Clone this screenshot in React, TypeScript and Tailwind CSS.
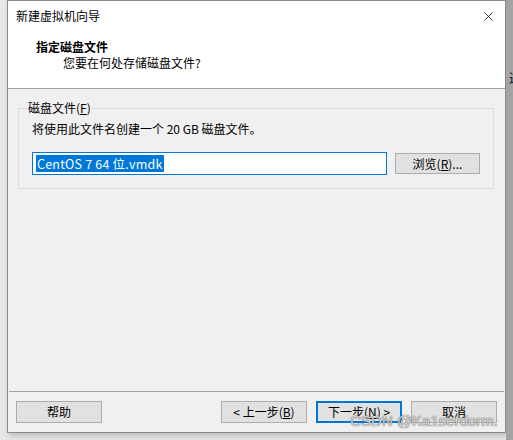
import { X } from "lucide-react";

const font = "font-['Noto_Sans_CJK_SC','Noto_Sans',sans-serif]";

function Btn({
  children,
  primary,
  className = "",
}: {
  children: React.ReactNode;
  primary?: boolean;
  className?: string;
}) {
  return (
    <button
      className={`h-[22px] w-[86px] flex items-center justify-center text-[12px] text-black bg-[#e1e1e1] ${
        primary ? "border-2 border-[#0078d7]" : "border border-[#adadad]"
      } ${className}`}
    >
      {children}
    </button>
  );
}

export default function App() {
  return (
    <div className={`w-[513px] h-[440px] bg-[#e8e8e8] flex overflow-hidden ${font}`}>
      {/* 窗口 */}
      <div className="ml-[7px] w-[499px] h-[433px] border border-[#8a8a8a] bg-[#f0f0f0] flex flex-col shadow-[2px_3px_6px_rgba(0,0,0,0.2)] relative">
        {/* 标题栏 + 头部 */}
        <div className="bg-white h-[87px] flex flex-col">
          <div className="h-[30px] flex items-center justify-between pl-[8px] pr-[9px]">
            <span className="text-[12px] text-black">新建虚拟机向导</span>
            <X size={15} strokeWidth={1.2} className="text-black" />
          </div>
          <div className="pl-[28px] pt-[8px] flex flex-col">
            <span className="text-[12px] font-bold text-black leading-[16px]">指定磁盘文件</span>
            <span className="text-[12px] text-black leading-[16px] pl-[27px]">
              您要在何处存储磁盘文件?
            </span>
          </div>
        </div>
        <div className="h-px bg-[#a0a0a0]" />

        {/* 内容 */}
        <div className="flex-1 flex flex-col">
          <div className="relative mt-[19px] ml-[10px] mr-[11px] h-[81px] border border-[#dcdcdc] pl-[13px]">
            <span className="absolute left-[8px] -top-[10px] px-[1px] bg-[#f0f0f0] text-[12px] text-black leading-[18px]">
              磁盘文件(<span className="underline">F</span>)
            </span>
            <div className="pt-[11px] text-[12px] text-black leading-[18px]">
              将使用此文件名创建一个 20 GB 磁盘文件。
            </div>
            <div className="mt-[14px] flex items-center gap-[8px]">
              <div className="w-[355px] h-[23px] border border-[#0078d7] bg-white flex items-center pl-[3px]">
                <span className="bg-[#0078d7] text-white text-[12.5px] leading-[17px] px-[1px] tracking-[0.2px]">
                  CentOS 7 64 位.vmdk
                </span>
              </div>
              <button className="w-[85px] h-[21px] bg-[#e1e1e1] border border-[#adadad] text-[12px] text-black flex items-center justify-center">
                浏览(<span className="underline">R</span>)...
              </button>
            </div>
          </div>
        </div>

        {/* 底部 */}
        <div className="h-px bg-[#a0a0a0] mx-px" />
        <div className="h-[40px] flex items-start pt-[9px] pl-[8px] pr-[8px]">
          <Btn>帮助</Btn>
          <div className="flex-1" />
          <Btn>
            &lt; 上一步(<span className="underline">B</span>)
          </Btn>
          <Btn primary className="ml-[9px]">
            下一步(<span className="underline">N</span>) &gt;
          </Btn>
          <Btn className="ml-[9px]">取消</Btn>
        </div>

        <span className="absolute right-[7px] bottom-[1px] text-[15px] leading-[20px] text-[rgba(235,235,235,0.85)] [text-shadow:0_0_1px_#555,0_0_1px_#777] font-['Liberation_Sans',sans-serif]">
          CSDN @Ka1serdorm.
        </span>
      </div>

      {/* 右侧背景 */}
      <div className="flex-1 bg-[#a4a4a4] relative">
        <span className="absolute left-[3px] top-[69px] text-[12px] text-black">进</span>
      </div>
    </div>
  );
}
